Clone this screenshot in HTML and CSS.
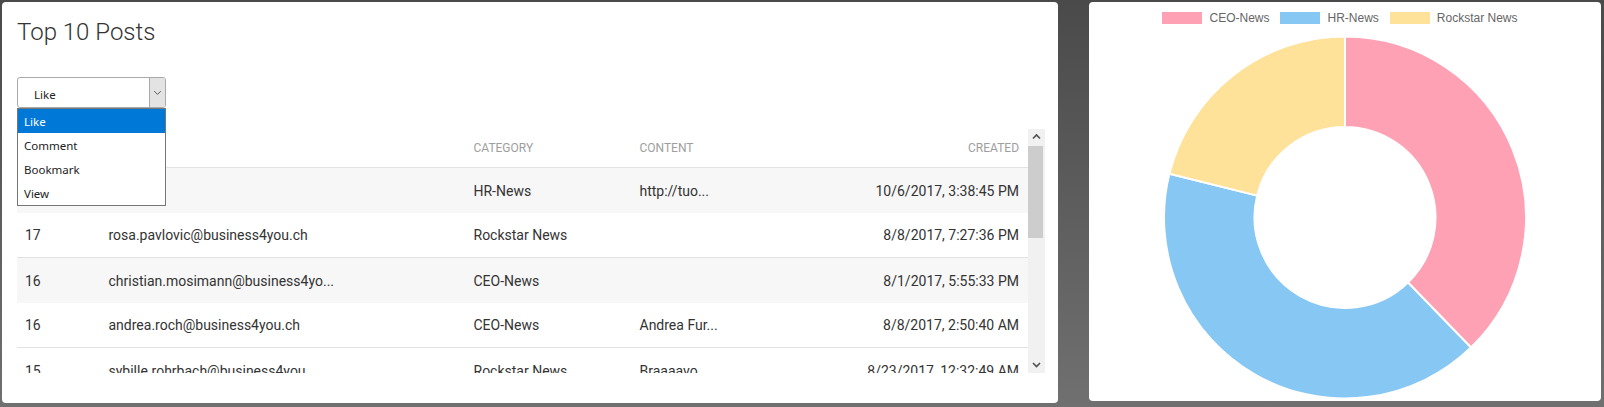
FILE: index.html
```html
<!DOCTYPE html>
<html>
<head>
<meta charset="utf-8">
<link rel="stylesheet" href="styles.css">
</head>
<body>
<div class="page">
  <section class="card posts">
    <h1 class="title">Top 10 Posts</h1>
    <div class="select-wrap">
      <div class="select">
        <span class="select-value">Like</span>
        <span class="select-btn">
          <svg width="16" height="29" viewBox="0 0 16 29"><polyline points="4.5,13 8,16.5 11.5,13" fill="none" stroke="#505050" stroke-width="1"/></svg>
        </span>
      </div>
      <ul class="options">
        <li class="option active">Like</li>
        <li class="option">Comment</li>
        <li class="option">Bookmark</li>
        <li class="option">View</li>
      </ul>
    </div>
    <div class="table-box">
      <div class="table">
        <div class="row head">
          <div>#</div><div>User</div><div>Category</div><div>Content</div><div class="r">Created</div>
        </div>
        <div class="row odd">
          <div>18</div><div></div><div>HR-News</div><div>http://tuo...</div><div class="r">10/6/2017, 3:38:45 PM</div>
        </div>
        <div class="row even">
          <div>17</div><div>rosa.pavlovic@business4you.ch</div><div>Rockstar News</div><div></div><div class="r">8/8/2017, 7:27:36 PM</div>
        </div>
        <div class="row odd">
          <div>16</div><div>christian.mosimann@business4yo...</div><div>CEO-News</div><div></div><div class="r">8/1/2017, 5:55:33 PM</div>
        </div>
        <div class="row even">
          <div>16</div><div>andrea.roch@business4you.ch</div><div>CEO-News</div><div>Andrea Fur...</div><div class="r">8/8/2017, 2:50:40 AM</div>
        </div>
        <div class="row plain">
          <div>15</div><div>sybille.rohrbach@business4you....</div><div>Rockstar News</div><div>Braaaavo ...</div><div class="r">8/23/2017, 12:32:49 AM</div>
        </div>
      </div>
      <div class="scrollbar">
        <div class="sb-btn">
          <svg width="17" height="17" viewBox="0 0 17 17"><polyline points="5,9.5 8.5,6 12,9.5" fill="none" stroke="#505050" stroke-width="1.6"/></svg>
        </div>
        <div class="sb-thumb"></div>
        <div class="sb-track"></div>
        <div class="sb-btn">
          <svg width="17" height="17" viewBox="0 0 17 17"><polyline points="5,7 8.5,10.5 12,7" fill="none" stroke="#505050" stroke-width="1.6"/></svg>
        </div>
      </div>
    </div>
  </section>

  <section class="card chart">
    <div class="legend">
      <span class="leg-item"><span class="leg-box pink"></span>CEO-News</span>
      <span class="leg-item"><span class="leg-box blue"></span>HR-News</span>
      <span class="leg-item"><span class="leg-box yellow"></span>Rockstar News</span>
    </div>
    <svg class="donut" width="512" height="367" viewBox="0 0 512 367">
      <path d="M256 2.5 A181 181 0 0 1 381.96 313.48 L318.98 248.49 A90.5 90.5 0 0 0 256 93 Z" fill="#ffa1b5" stroke="#fff" stroke-width="2"/>
      <path d="M381.96 313.48 A181 181 0 0 1 80.38 139.71 L168.19 161.61 A90.5 90.5 0 0 0 318.98 248.49 Z" fill="#86c7f3" stroke="#fff" stroke-width="2"/>
      <path d="M80.38 139.71 A181 181 0 0 1 256 2.5 L256 93 A90.5 90.5 0 0 0 168.19 161.61 Z" fill="#ffe29a" stroke="#fff" stroke-width="2"/>
    </svg>
  </section>
</div>
</body>
</html>
```

FILE: styles.css
```css
* { box-sizing: border-box; }
html, body { margin: 0; padding: 0; }
body {
  width: 1604px;
  height: 407px;
  overflow: hidden;
  background: linear-gradient(to bottom, #4a4a4a 0%, #707070 100%);
  font-family: Roboto, "Liberation Sans", sans-serif;
}
.page {
  display: flex;
  align-items: flex-start;
  gap: 31px;
  padding: 2px;
}
.card {
  background: #fff;
  border-radius: 4px;
}
.posts {
  width: 1056px;
  height: 401px;
  padding: 16px 13px 0 15px;
}
.title {
  margin: 0;
  font-family: Roboto, sans-serif;
  font-weight: 300;
  font-size: 24px;
  line-height: 28px;
  color: #333;
}
.select-wrap {
  position: relative;
  width: 149px;
  margin-top: 31px;
  z-index: 2;
}
.select {
  display: flex;
  align-items: center;
  height: 31px;
  border: 1px solid #a9a9a9;
  border-radius: 3px;
  background: #fff;
  font-family: "Noto Sans", "Open Sans", sans-serif;
  font-size: 11.5px;
  color: #222;
}
.select-value {
  flex: 1;
  padding-left: 16px;
  padding-top: 3px;
}
.select-btn {
  display: flex;
  width: 16px;
  height: 29px;
  background: #e3e3e3;
  border-left: 1px solid #a9a9a9;
  border-radius: 0 2px 2px 0;
}
.options {
  position: absolute;
  left: 0;
  top: 31px;
  width: 149px;
  margin: 0;
  padding: 0;
  list-style: none;
  background: #fff;
  border: 1px solid #767676;
  font-family: "Noto Sans", "Open Sans", sans-serif;
  font-size: 11.5px;
  color: #222;
}
.option {
  height: 24px;
  line-height: 22px;
  padding: 2px 0 0 6px;
}
.option.active {
  background: #0078d7;
  color: #fff;
}
.table-box {
  display: flex;
  margin-top: 21px;
  height: 244px;
  overflow: hidden;
}
.table {
  flex: 1;
  overflow: hidden;
}
.row {
  display: grid;
  grid-template-columns: 83.5px 365px 166px 1fr 220px;
  align-items: center;
  padding: 0 9px 0 8px;
  height: 45px;
  font-size: 14px;
  color: #333;
  white-space: nowrap;
}
.row .r { text-align: right; }
.row.head {
  height: 39px;
  padding-bottom: 1px;
  border-bottom: 1px solid #e2e2e2;
  font-size: 12px;
  color: #9e9e9e;
  text-transform: uppercase;
}
.row.odd { background: #f7f7f7; }
.row.even {
  background: #fff;
  border-bottom: 1px solid #e2e2e2;
}
.row.plain { background: #fff; }
.scrollbar {
  display: flex;
  flex-direction: column;
  width: 17px;
  background: #f1f1f1;
}
.sb-btn {
  display: flex;
  height: 17px;
  flex: none;
}
.sb-thumb {
  height: 92px;
  margin: 0 2px 0 0;
  background: #cdcdcd;
}
.sb-track { flex: 1; }
.chart {
  width: 512px;
  height: 399px;
  display: flex;
  flex-direction: column;
}
.legend {
  display: flex;
  justify-content: center;
  align-items: center;
  gap: 11px;
  height: 32px;
  padding: 0 10px 1px 0;
  font-family: "Liberation Sans", Arial, sans-serif;
  font-size: 12px;
  color: #666;
}
.leg-item {
  display: flex;
  align-items: center;
}
.leg-box {
  width: 40px;
  height: 12px;
  margin-right: 7px;
}
.leg-box.pink { background: #ffa1b5; }
.leg-box.blue { background: #86c7f3; }
.leg-box.yellow { background: #ffe29a; }
.donut { display: block; }
```
